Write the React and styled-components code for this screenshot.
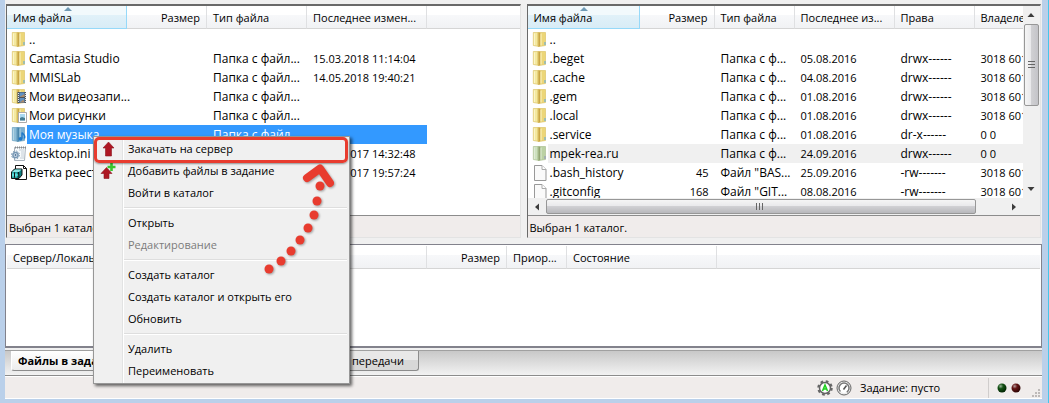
import React from 'react';
import styled, { createGlobalStyle, css } from 'styled-components';

const GlobalStyle = createGlobalStyle`
	* { box-sizing: border-box; }
	body {
		margin: 0;
		background: #bad0ea;
		color: #000;
		font: 11px/18px 'Open Sans', 'Noto Sans', sans-serif;
	}
	button { font: inherit; color: inherit; }
`;

const Window = styled.div`
	position: relative;
	min-height: 100vh;
	padding: 0 6px 5px 5px;
	background: #bad0ea;
	border-right: 1px solid #45c6ea;
	overflow: hidden;
`;

const Client = styled.main`
	padding-top: 4px;
	background: #f0f0f0;
`;

const Panes = styled.div`
	display: grid;
	grid-template-columns: minmax(0, 1fr) minmax(0, 1fr);
	gap: 6px;
	padding: 0 1px 0 1px;
`;

const Pane = styled.section`
	display: flex;
	flex-direction: column;
	border: 1px solid #696969;
	border-top-width: 2px;
	border-right-color: #e3e3e3;
	border-bottom-color: #e3e3e3;
	background: #fff;
`;

const PaneBody = styled.div`
	display: grid;
	grid-template-columns: minmax(0, 1fr) ${props => (props.$scroll ? '17px' : '')};
	height: 209px;
	grid-template-rows: minmax(0, 1fr) ${props => (props.$scroll ? '17px' : '')};
`;

const ListView = styled.div`
	min-width: 0;
	overflow: hidden;
`;

const PaneStatus = styled.div`
	height: 22px;
	padding: 3px 2px 0;
	border-top: 1px solid #8c8c8c;
	background: #f0eceb;
`;

const Table = styled.table`
	width: 100%;
	table-layout: fixed;
	border-collapse: separate;
	border-spacing: 0;
`;

const Th = styled.th`
	position: relative;
	height: 23px;
	padding: 2px 6px 0;
	border-right: 1px solid #dfe0e2;
	border-bottom: 1px solid #d5d5d5;
	background: linear-gradient(#fff 0 40%, #f7f8fa 40%, #f1f2f4);
	font-weight: normal;
	text-align: ${props => (props.$right ? 'right' : 'left')};
	white-space: nowrap;
	overflow: hidden;

	&:last-child {
		border-right: none;
	}

	${props =>
		props.$sorted &&
		css`
			border-color: #96d9f9;
			background: linear-gradient(#f2f9fc 0 40%, #e1f1f9 40%, #d8ecf6);

			// sort marker
			&::before {
				content: '';
				position: absolute;
				top: 1px;
				left: 50%;
				border-style: solid;
				border-width: 0 4px 4px 4px;
				margin-left: -3px;
				border-color: transparent transparent #6f9ab5 transparent;
			}
	`};
`;

const Td = styled.td`
	height: 19px;
	padding: 0 6px;
	line-height: 19px;
	text-align: ${props => (props.$right ? 'right' : 'left')};
	white-space: nowrap;
	overflow: hidden;
`;

const NameTd = styled(Td)`
	padding: 0 0 0 4px;
	font-size: 12px;
	overflow: visible;
`;

const WideTd = styled(Td)`
	font-size: 12px;
`;

const Name = styled.div`
	display: flex;
	height: 19px;

	svg {
		flex: none;
		margin-top: 1px;
	}
	span {
		flex: 1;
		padding-left: 2px;
	}
`;

const Row = styled.tr`
	${props =>
		props.$state === 'selected' &&
		css`
			color: #fff;
			td:not(:first-child):not(:last-child), span { background: #3399ff; }
	`};
	${props =>
		props.$state === 'inactive' &&
		css`
			td:not(:first-child), span { background: #f0f0f0; }
			svg { filter: hue-rotate(35deg) saturate(0.45) brightness(0.95); }
	`};
`;

const Spacer = styled.tr`
	height: 1px;

	td { padding: 0; }
`;

const VScroll = styled.div`
	display: flex;
	flex-direction: column;
	align-items: center;
	padding-right: 1px;
	background: #f0f0f0;
`;

const HScroll = styled.div`
	display: flex;
	align-items: center;
	background: #f0f0f0;
`;

const ScrollButton = styled.button`
	display: flex;
	align-items: center;
	justify-content: center;
	flex: none;
	width: 18px;
	height: 18px;
	padding: 0;
	border: none;
	background: none;
`;

const VThumb = styled.div`
	display: flex;
	align-items: center;
	justify-content: center;
	width: 15px;
	height: 82px;
	border: 1px solid #979797;
	border-radius: 2px;
	background: linear-gradient(90deg, #f5f5f5, #e9e9eb 45%, #d0d0d3 50%, #c4c4c8);
`;

const HThumb = styled.div`
	display: flex;
	align-items: center;
	justify-content: center;
	flex: 1;
	height: 15px;
	margin-right: 29px;
	border: 1px solid #979797;
	border-radius: 2px;
	background: linear-gradient(#f5f5f5, #e9e9eb 45%, #d0d0d3 50%, #b8b8bc);
`;

const ScrollCorner = styled.div`
	background: #f0f0f0;
`;

const Queue = styled.section`
	height: 104px;
	margin-top: 6px;
	padding: 1px 1px 0;
	border: 1px solid #82828c;
	border-bottom-width: 2px;
	background: #fff;
	overflow: hidden;
`;

const Tabs = styled.div`
	display: flex;
	align-items: flex-start;
	height: 26px;
	margin-top: 2px;
	padding-left: 6px;
	border-top: 1px solid #a0a0a0;
	border-bottom: 1px solid #8c8c8c;
	background: linear-gradient(#c8c8c8, #f2f2f2);
`;

const Tab = styled.button`
	width: 136px;
	height: 20px;
	padding: 0 14px 0 6px;
	border: 1px solid #8c8c8c;
	border-top: none;
	border-left-color: #fff;
	border-radius: 0 0 3px 3px;
	background: linear-gradient(#e8e8e8 0 45%, #d8d8d8 45%);
	line-height: 18px;
	text-align: right;
	white-space: nowrap;
	overflow: hidden;

	${props =>
		props.$active &&
		css`
			background: linear-gradient(#fff, #ececec);
			font-weight: bold;
			text-align: left;
	`};
`;

const StatusBar = styled.footer`
	display: flex;
	align-items: center;
	justify-content: flex-end;
	height: 23px;
	border: solid #fff;
	border-width: 1px 0;
	background: #f0eceb;
`;

const StatusText = styled.span`
	width: 136px;
	padding-left: 8px;
`;

const Leds = styled.div`
	display: flex;
	align-items: center;
	gap: 4px;
	width: 54px;
	height: 20px;
	padding-left: 8px;
	border-left: 1px solid #d0cdcc;
`;

const Grip = styled.svg`
	align-self: flex-end;
	margin-left: 7px;
`;

const Menu = styled.div`
	position: absolute;
	top: 136px;
	left: 93px;
	width: 257px;
	padding: 1px;
	border: 1px solid #979797;
	background: linear-gradient(90deg, transparent 28px, #e2e3e3 28px 29px, #fff 29px 30px, transparent 30px) #f0f0f0;
	box-shadow: 2px 2px 3px rgba(0, 0, 0, 0.6);
`;

const MenuItem = styled.button`
	display: grid;
	grid-template-columns: 26px 1fr;
	align-items: center;
	column-gap: 7px;
	width: 100%;
	height: 22px;
	padding: 0;
	border: none;
	background: none;
	text-align: left;

	svg { justify-self: center; }
	&:disabled { color: #7c7c7c; }
`;

const Separator = styled.hr`
	height: 2px;
	margin: 3px 1px 3px 29px;
	border: none;
	border-top: 1px solid #dedede;
	border-bottom: 1px solid #fff;
`;

const Frame = styled.div`
	position: absolute;
	top: 137px;
	left: 94px;
	width: 254px;
	height: 26px;
	border: 3px solid #e83c2f;
	border-radius: 5px;
	box-shadow: 0 1px 2px rgba(0, 0, 0, 0.4);
	pointer-events: none;
`;

const Trail = styled.svg`
	position: absolute;
	top: 160px;
	left: 260px;
	filter: drop-shadow(1px 1px 1px rgba(0, 0, 0, 0.35));
	pointer-events: none;
`;

const gold = { front: '#f4e9a0', back: '#ecd678', seam: '#c9a544', edge: '#d9bd5c', light: '#fbf5c8' };
const blue = { front: '#8fbdd6', back: '#79aed0', seam: '#4b86ab', edge: '#5f98bb', light: '#b5d6e6' };

const Folder = ({ tone = gold, children }) => (
	<svg width="16" height="17" viewBox="0 0 16 17" aria-hidden="true">
		<path d="M7 1.500h6.500v13L7 15.500z" fill={tone.back} stroke={tone.edge} strokeWidth=".6" />
		<path d="M1.300 1.500H7v14l-5.700-1z" fill={tone.front} stroke={tone.edge} strokeWidth=".6" />
		<path d="M5.500 1.500h1v14l-1-.5z" fill={tone.edge} />
		<path d="m6.500 1.500 2 .5v12.500L6.500 16z" fill={tone.seam} />
		<path d="M9 2.500v12" stroke={tone.light} />
		<path d="M2.500 2.500V14" stroke={tone.light} />
		<path d="M13 11v3" stroke="#5aa9dd" />
		{children}
	</svg>
);

const FileIcon = () => (
	<svg width="16" height="17" viewBox="0 0 16 17" aria-hidden="true">
		<path d="M2.500 1.500h7.500l4 4v11H2.500z" fill="#fafafa" stroke="#999" />
		<path d="M10 1.500v4h4" fill="#fff" stroke="#aaa" />
	</svg>
);

const icons = {
	folder: <Folder />,
	file: <FileIcon />,
	video: (
		<Folder>
			<path d="M6.500 4H15v11H6.500z" fill="#4a535c" />
			<path d="M8.500 4.500h5v4.500h-5zM8.500 10h5v4.500h-5z" fill="#5e91c4" />
			<path d="M7.500 5v10M14.500 5v10" stroke="#e5e5e5" strokeDasharray="1 1" />
			<path d="m8.500 9 5-3v3zM8.500 14.500l4-3 1 3z" fill="#a98a6c" />
		</Folder>
	),
	picture: (
		<Folder>
			<path d="M7.500 5.500h8v10h-8z" fill="#fff" stroke="#aaa" />
			<path d="M9 7h5v6.500H9z" fill="#a9d8f0" />
			<path d="m9 11 2-1 3 1v2.500H9z" fill="#457c92" />
		</Folder>
	),
	music: (
		<Folder tone={blue}>
			<path d="M11 12.500V6.500c1 2 4 2.500 2.500 6" fill="none" stroke="#1f78c8" strokeWidth="1.300" />
			<circle cx="9.500" cy="12.800" r="1.900" fill="#1f78c8" />
		</Folder>
	),
	ini: (
		<svg width="16" height="17" viewBox="0 0 16 17" aria-hidden="true">
			<path d="M3.500 2.500h11l-1 13h-10z" fill="#f7fafc" stroke="#a9b3bd" />
			<path d="M4 2.500h11" stroke="#888" strokeDasharray="1 1" strokeWidth="2" />
			<path d="M8 5h5M10 7h3M10 9h3M10 11h3M9 13h4" stroke="#c3cdd6" />
			<circle cx="4.500" cy="10" r="2.600" fill="#dce8f3" stroke="#7898b5" strokeWidth="1.500" />
			<circle cx="4.500" cy="10" r="4" fill="none" stroke="#7898b5" strokeDasharray="1.500 1.640" />
			<circle cx="4.500" cy="10" r="1" fill="#54779a" />
		</svg>
	),
	reg: (
		<svg width="16" height="17" viewBox="0 0 16 17" aria-hidden="true">
			<path d="M4.500 1.500h8l3 3v11h-11z" fill="#fff" stroke="#111" />
			<path d="M12.500 1.500v3h3" fill="none" stroke="#111" />
			<path d="m.5 8 3-3H11v6l-3 3.500H.500z" fill="#0d7f7f" stroke="#111" />
			<path d="m1 8 3-2.500h6.500L8 8z" fill="#8de5e5" />
			<path d="M2 8.500v5M5 8.500v5M1 11h6.500" stroke="#7ff" />
			<path d="m7.500 8 .5 6M3.500 8.500v5" stroke="#111" />
		</svg>
	),
};

const UploadIcon = () => (
	<svg width="16" height="16" viewBox="0 0 16 16" aria-hidden="true">
		<path d="m8.500 1 5.500 6h-2.500v8h-6V7H3z" fill="#ae1723" stroke="#8b1821" strokeWidth=".6" />
	</svg>
);

const AddIcon = () => (
	<svg width="16" height="16" viewBox="0 0 16 16" aria-hidden="true">
		<path d="m6.500 4.500 5.500 6H9V15.500H4V10.500H1z" fill="#ae1723" stroke="#8b1821" strokeWidth=".6" />
		<path d="M11.500 0v8M7.500 4h8" stroke="#3ac52f" strokeWidth="2.600" />
	</svg>
);

const Arrow = ({ turn }) => (
	<svg width="8" height="8" viewBox="0 0 8 8" aria-hidden="true">
		<path d="m4 2 3.500 4h-7z" fill="#3c3c3c" transform={`rotate(${turn} 4 4)`} />
	</svg>
);

const localColumns = [
	{ title: 'Имя файла', width: 120, sorted: true },
	{ title: 'Размер', width: 80, right: true },
	{ title: 'Тип файла', width: 100 },
	{ title: 'Последнее измен...', width: 120 },
	{ title: '' },
];

const localFiles = [
	['folder', '..', '', '', '', ''],
	['folder', 'Camtasia Studio', '', 'Папка с файл...', '15.03.2018 11:14:04', ''],
	['folder', 'MMISLab', '', 'Папка с файл...', '14.05.2018 19:40:21', ''],
	['video', 'Мои видеозапи...', '', 'Папка с файл...', '', ''],
	['picture', 'Мои рисунки', '', 'Папка с файл...', '', ''],
	['music', 'Моя музыка', '', 'Папка с файл...', '', ''],
	['ini', 'desktop.ini', '', '', '18.04.2017 14:32:48', ''],
	['reg', 'Ветка реестра', '', '', '18.04.2017 19:57:24', ''],
];

const remoteColumns = [
	{ title: 'Имя файла', width: 112, sorted: true },
	{ title: 'Размер', width: 75, right: true },
	{ title: 'Тип файла', width: 80 },
	{ title: 'Последнее из...', width: 100 },
	{ title: 'Права', width: 80 },
	{ title: 'Владелец', width: 100 },
];

const remoteFiles = [
	['folder', '..', '', '', '', '', ''],
	['folder', '.beget', '', 'Папка с ф...', '05.08.2016', 'drwx------', '3018 601'],
	['folder', '.cache', '', 'Папка с ф...', '04.08.2016', 'drwx------', '3018 601'],
	['folder', '.gem', '', 'Папка с ф...', '01.08.2016', 'drwx------', '3018 601'],
	['folder', '.local', '', 'Папка с ф...', '01.08.2016', 'drwx------', '3018 601'],
	['folder', '.service', '', 'Папка с ф...', '01.08.2016', 'dr-x------', '0 0'],
	['folder', 'mpek-rea.ru', '', 'Папка с ф...', '24.09.2016', 'drwx------', '0 0'],
	['file', '.bash_history', '45', 'Файл "BAS...', '25.09.2016', '-rw-------', '3018 601'],
	['file', '.gitconfig', '168', 'Файл "GIT...', '08.08.2016', '-rw-------', '3018 601'],
];

const queueColumns = [
	{ title: 'Сервер/Локальный файл', width: 420 },
	{ title: 'Размер', width: 80, right: true },
	{ title: 'Приор...', width: 60 },
	{ title: 'Состояние', width: 150 },
	{ title: '' },
];

const menu = [
	{ label: 'Закачать на сервер', icon: <UploadIcon /> },
	{ label: 'Добавить файлы в задание', icon: <AddIcon /> },
	{ label: 'Войти в каталог' },
	null,
	{ label: 'Открыть' },
	{ label: 'Редактирование', disabled: true },
	null,
	{ label: 'Создать каталог' },
	{ label: 'Создать каталог и открыть его' },
	{ label: 'Обновить' },
	null,
	{ label: 'Удалить' },
	{ label: 'Переименовать' },
];

const dots = [[9, 109], [21, 101], [31, 91], [40, 80], [48, 68], [54, 55], [57, 41], [60, 26]];

const FileTable = ({ label, columns, files = [], active, state }) => (
	<Table aria-label={label}>
		<colgroup>
			{columns.map((col, i) => (
				<col key={i} width={col.width} />
			))}
		</colgroup>
		<thead>
			<tr>
				{columns.map((col, i) => (
					<Th key={i} $right={col.right} $sorted={col.sorted}>{col.title}</Th>
				))}
			</tr>
		</thead>
		<tbody>
			<Spacer><td colSpan={columns.length} /></Spacer>
			{files.map(([icon, name, size, type, date, rights, owner], i) => (
				<Row key={name} $state={i === active ? state : undefined}>
					<NameTd>
						<Name>
							{icons[icon]}
							<span>{name}</span>
						</Name>
					</NameTd>
					<Td $right>{size}</Td>
					<WideTd>{type}</WideTd>
					<Td>{date}</Td>
					<WideTd>{rights}</WideTd>
					{owner !== undefined && <Td>{owner}</Td>}
				</Row>
			))}
		</tbody>
	</Table>
);

const ContextMenu = () => (
	<Menu role="menu">
		{menu.map((item, i) =>
			item ? (
				<MenuItem key={i} role="menuitem" disabled={item.disabled}>
					{item.icon || <i />}
					<span>{item.label}</span>
				</MenuItem>
			) : (
				<Separator key={i} />
			)
		)}
	</Menu>
);

const App = () => {
	return (
		<>
			<GlobalStyle />
			<Window>
				<Client>
					<Panes>
						<Pane>
							<PaneBody>
								<ListView>
									<FileTable label="Локальные файлы" columns={localColumns} files={localFiles} active={5} state="selected" />
								</ListView>
							</PaneBody>
							<PaneStatus>Выбран 1 каталог.</PaneStatus>
						</Pane>
						<Pane>
							<PaneBody $scroll>
								<ListView>
									<FileTable label="Файлы на сервере" columns={remoteColumns} files={remoteFiles} active={6} state="inactive" />
								</ListView>
								<VScroll>
									<ScrollButton aria-label="Вверх"><Arrow turn={0} /></ScrollButton>
									<VThumb>
										<svg width="7" height="9" viewBox="0 0 7 9"><path d="M0 .5h7M0 3.500h7M0 6.500h7" stroke="#666" /></svg>
									</VThumb>
									<ScrollButton aria-label="Вниз" style={{ marginTop: 'auto' }}><Arrow turn={180} /></ScrollButton>
								</VScroll>
								<HScroll>
									<ScrollButton aria-label="Влево"><Arrow turn={270} /></ScrollButton>
									<HThumb>
										<svg width="9" height="7" viewBox="0 0 9 7"><path d="M.5 0v7M3.500 0v7M6.500 0v7" stroke="#666" /></svg>
									</HThumb>
									<ScrollButton aria-label="Вправо"><Arrow turn={90} /></ScrollButton>
								</HScroll>
								<ScrollCorner />
							</PaneBody>
							<PaneStatus>Выбран 1 каталог.</PaneStatus>
						</Pane>
					</Panes>
					<Queue>
						<FileTable label="Задания" columns={queueColumns} />
					</Queue>
					<Tabs>
						<Tab $active>Файлы в задании</Tab>
						<Tab>Неудавшиеся</Tab>
						<Tab>Успешные передачи</Tab>
					</Tabs>
					<StatusBar>
						<svg width="16" height="16" viewBox="0 0 16 16" aria-hidden="true">
							<circle cx="8" cy="8" r="6.500" fill="none" stroke="#666" strokeWidth="2.500" strokeDasharray="2.600 2.500" />
							<circle cx="8" cy="8" r="5.500" fill="#fff" stroke="#666" strokeWidth="1.500" />
							<path d="m5.500 11 2.500-6 2.500 6M6.500 9h3" fill="none" stroke="#20d020" strokeWidth="1.600" />
						</svg>
						<svg width="16" height="16" viewBox="0 0 16 16" style={{ marginLeft: 3 }} aria-hidden="true">
							<circle cx="8" cy="8" r="7" fill="#eee" stroke="#666" />
							<circle cx="8" cy="8" r="5" fill="#fff" stroke="#777" strokeWidth="1.500" strokeDasharray="24 8" transform="rotate(135 8 8)" />
							<path d="m7.500 9.500 3-4" stroke="#555" strokeWidth="1.500" />
						</svg>
						<StatusText>Задание: пусто</StatusText>
						<Leds>
							<svg width="24" height="10" viewBox="0 0 24 10" aria-hidden="true">
								<defs>
									<radialGradient id="green" cx=".35" cy=".3" r=".7"><stop stopColor="#9db59d" /><stop offset=".4" stopColor="#155315" /><stop offset="1" stopColor="#032503" /></radialGradient>
									<radialGradient id="red" cx=".35" cy=".3" r=".7"><stop stopColor="#b59d9d" /><stop offset=".4" stopColor="#651515" /><stop offset="1" stopColor="#2c0303" /></radialGradient>
								</defs>
								<circle cx="5" cy="5" r="4.500" fill="url(#green)" />
								<circle cx="19" cy="5" r="4.500" fill="url(#red)" />
							</svg>
							<Grip width="9" height="9" viewBox="0 0 9 9" aria-hidden="true">
								<path d="M6 0h2v2H6zM3 3h2v2H3zM6 3h2v2H6zM0 6h2v2H0zM3 6h2v2H3zM6 6h2v2H6z" fill="#bdb9b8" />
							</Grip>
						</Leds>
					</StatusBar>
				</Client>
				<ContextMenu />
				<Frame />
				<Trail width="90" height="120" viewBox="0 0 90 120" aria-hidden="true">
					{dots.map(([x, y]) => (
						<circle key={y} cx={x} cy={y} r="4.500" fill="#e83c2f" />
					))}
					<path d="M47 18 60 8.500 70 23" fill="none" stroke="#e83c2f" strokeWidth="8" strokeLinecap="round" strokeLinejoin="round" />
				</Trail>
			</Window>
		</>
	);
};

export default App;
